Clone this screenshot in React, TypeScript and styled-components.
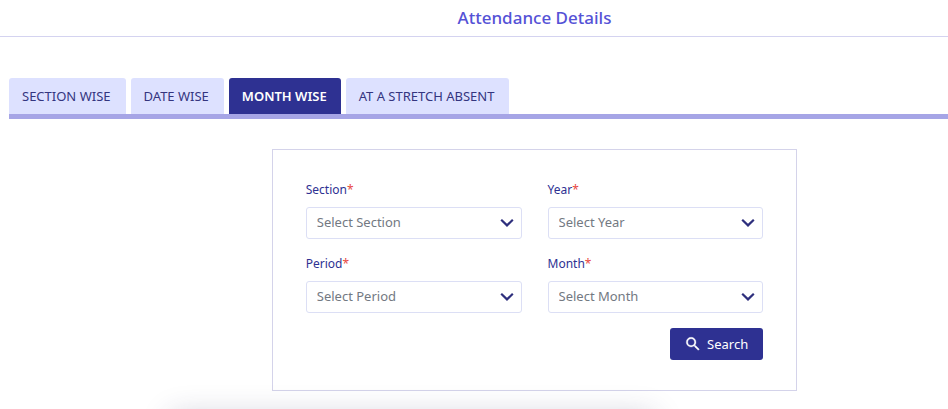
import React from "react";
import styled, { createGlobalStyle } from "styled-components";

const GlobalStyle = createGlobalStyle`
  *, *::before, *::after { box-sizing: border-box; }
  html, body { margin: 0; background: #fff; }
  body {
    overflow: hidden;
    font-family: "Segoe UI", "Noto Sans", "Open Sans", sans-serif;
    color: #2e3192;
  }
  button, select { font-family: inherit; }
`;

const Page = styled.div`
  width: calc(100% + 121px);
  min-height: 100vh;
`;

const Header = styled.header`
  height: 37px;
  border-bottom: 1px solid #d4d3f0;
  text-align: center;
`;

const Title = styled.h1`
  margin: 0;
  font-size: 17px;
  font-weight: 500;
  line-height: 36px;
  color: #5552d6;
`;

const Main = styled.main`
  padding: 41px 9px 0;
`;

const TabBar = styled.div`
  display: flex;
  gap: 5px;
  border-bottom: 5px solid #a6a5e6;
`;

const Tab = styled.button<{ $active: boolean }>`
  height: 36px;
  padding: 0 ${(p) => (p.$active ? 14 : 15)}px 0 13px;
  border: 0;
  border-radius: 3px 3px 0 0;
  background: ${(p) => (p.$active ? "#2e3192" : "#dde1ff")};
  color: ${(p) => (p.$active ? "#fff" : "#34357f")};
  font-size: 13px;
  font-weight: ${(p) => (p.$active ? 600 : 400)};
  line-height: 36px;
  white-space: nowrap;
  cursor: pointer;
`;

const Card = styled.form`
  display: grid;
  grid-template-columns: 1fr 1fr;
  gap: 15px 26px;
  width: 50%;
  margin: 30px auto 0;
  padding: 30px 33px;
  border: 1px solid #d4d3ea;
`;

const Field = styled.div`
  display: flex;
  flex-direction: column;
  gap: 7px;
`;

const Label = styled.label`
  font-size: 12px;
  line-height: 20px;
`;

const Required = styled.span`
  color: #e8483f;
`;

const SelectWrap = styled.div`
  display: grid;
  align-items: center;

  > * { grid-area: 1 / 1; }
`;

const Select = styled.select`
  appearance: none;
  width: 100%;
  height: 32px;
  padding: 0 30px 2px 10px;
  border: 1px solid #dcdff5;
  border-radius: 3px;
  background: #fff;
  color: #737982;
  font-size: 13px;
  line-height: 20px;
`;

const Chevron = styled.svg`
  justify-self: end;
  margin-right: 8px;
  pointer-events: none;
`;

const Actions = styled.div`
  grid-column: 1 / -1;
  display: flex;
  justify-content: flex-end;
`;

const SearchButton = styled.button`
  display: flex;
  align-items: center;
  gap: 5px;
  height: 32px;
  padding: 0 15px 0 14px;
  border: 0;
  border-radius: 3px;
  background: #2e3192;
  color: #fff;
  font-size: 13px;
  cursor: pointer;
`;

const LowerPanel = styled.div`
  position: fixed;
  top: 100%;
  left: 18%;
  right: 31%;
  height: 80px;
  margin-top: 6px;
  box-shadow: 0 0 30px rgba(40, 40, 90, 0.22);
  pointer-events: none;
`;

const tabs = ["SECTION WISE", "DATE WISE", "MONTH WISE", "AT A STRETCH ABSENT"];
const fields = ["Section", "Year", "Period", "Month"];

function SearchIcon() {
  return (
    <svg width="18" height="18" viewBox="0 0 24 24" fill="currentColor" stroke="currentColor" strokeWidth="0.4" aria-hidden="true">
      <path d="M15.5 14h-.79l-.28-.27A6.471 6.471 0 0 0 16 9.5 6.5 6.5 0 1 0 9.5 16c1.61 0 3.09-.59 4.23-1.57l.27.28v.79l5 4.99L20.49 19l-4.99-5zm-6 0C7.01 14 5 11.99 5 9.5S7.01 5 9.5 5 14 7.01 14 9.5 11.99 14 9.5 14z" />
    </svg>
  );
}

function SelectField({ name }: { name: string }) {
  const id = name.toLowerCase();
  return (
    <Field>
      <Label htmlFor={id}>
        {name}
        <Required>*</Required>
      </Label>
      <SelectWrap>
        <Select id={id} defaultValue="">
          <option value="">Select {name}</option>
        </Select>
        <Chevron width="14" height="10" viewBox="0 0 14 10" aria-hidden="true">
          <path d="M1.2 1.8 7 7.4l5.8-5.6" fill="none" stroke="#2e2f7d" strokeWidth="2.2" />
        </Chevron>
      </SelectWrap>
    </Field>
  );
}

export default function App() {
  const [active, setActive] = React.useState("MONTH WISE");
  return (
    <>
      <GlobalStyle />
      <Page>
        <Header>
          <Title>Attendance Details</Title>
        </Header>
        <Main>
          <TabBar role="tablist">
            {tabs.map((tab) => (
              <Tab
                key={tab}
                type="button"
                role="tab"
                aria-selected={tab === active}
                $active={tab === active}
                onClick={() => setActive(tab)}
              >
                {tab}
              </Tab>
            ))}
          </TabBar>
          <Card onSubmit={(e) => e.preventDefault()}>
            {fields.map((name) => (
              <SelectField key={name} name={name} />
            ))}
            <Actions>
              <SearchButton type="submit">
                <SearchIcon />
                Search
              </SearchButton>
            </Actions>
          </Card>
        </Main>
      </Page>
      <LowerPanel />
    </>
  );
}
